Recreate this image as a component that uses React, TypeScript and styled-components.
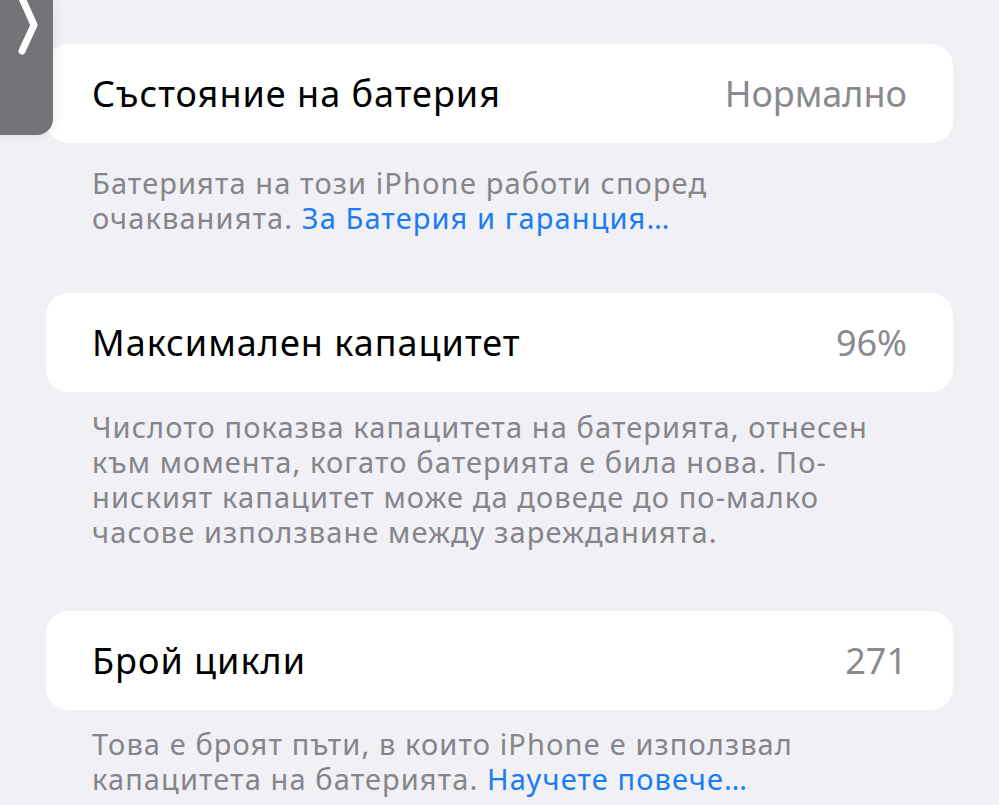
import React from "react";
import styled, { createGlobalStyle } from "styled-components";

const Global = createGlobalStyle`
  html, body { margin: 0; padding: 0; background: #f0f0f5; }
  body {
    font-family: "Noto Sans", "Open Sans", "DejaVu Sans", sans-serif;
    -webkit-font-smoothing: antialiased;
  }
`;

const Page = styled.main`
  position: relative;
  width: 999px;
  height: 805px;
  overflow: hidden;
  box-sizing: border-box;
  padding: 44px 46px 0 46px;
  background: #f0f0f5;
`;

const Section = styled.section<{ $gap: number }>`
  display: flex;
  flex-direction: column;
  margin-bottom: ${(p) => p.$gap}px;
`;

const Card = styled.div`
  display: flex;
  align-items: center;
  justify-content: space-between;
  height: 99px;
  box-sizing: border-box;
  padding: 0 46px;
  background: #ffffff;
  border-radius: 22px;
`;

const Title = styled.span`
  font-size: 36px;
  color: #000000;
  letter-spacing: 1px;
`;

const Value = styled.span`
  font-size: 36px;
  color: #8a8a8e;
`;

const Footer = styled.p<{ $top: number }>`
  margin: ${(p) => p.$top}px 0 0 0;
  padding: 0 46px;
  font-size: 29px;
  line-height: 35px;
  color: #85858a;
  letter-spacing: 1.1px;
`;

const Link = styled.a`
  color: #1a7cf5;
  text-decoration: none;
`;

const Handle = styled.div`
  position: absolute;
  left: 0;
  top: 0;
  width: 53px;
  height: 135px;
  background: #737477;
  border-bottom-right-radius: 16px;
  box-shadow: 0 0 14px rgba(0, 0, 0, 0.08);
`;

const Chevron = () => (
  <svg width="53" height="60" viewBox="0 0 53 60" style={{ display: "block" }}>
    <path
      d="M21 -4 L34 25 L22 51"
      fill="none"
      stroke="#ffffff"
      strokeWidth="7"
      strokeLinecap="round"
      strokeLinejoin="round"
    />
  </svg>
);

export default function App() {
  return (
    <>
      <Global />
      <Page lang="bg">
        <Section $gap={58}>
          <Card>
            <Title>Състояние на батерия</Title>
            <Value>Нормално</Value>
          </Card>
          <Footer $top={22}>
            Батерията на този iPhone работи според
            <br />
            очакванията. <Link>За Батерия и гаранция…</Link>
          </Footer>
        </Section>
        <Section $gap={62}>
          <Card>
            <Title>Максимален капацитет</Title>
            <Value>96%</Value>
          </Card>
          <Footer $top={17}>
            Числото показва капацитета на батерията, отнесен
            <br />
            към момента, когато батерията е била нова. По-
            <br />
            ниският капацитет може да доведе до по-малко
            <br />
            часове използване между зарежданията.
          </Footer>
        </Section>
        <Section $gap={0}>
          <Card>
            <Title>Брой цикли</Title>
            <Value>271</Value>
          </Card>
          <Footer $top={16}>
            Това е броят пъти, в които iPhone е използвал
            <br />
            капацитета на батерията. <Link>Научете повече…</Link>
          </Footer>
        </Section>
        <Handle>
          <Chevron />
        </Handle>
      </Page>
    </>
  );
}
